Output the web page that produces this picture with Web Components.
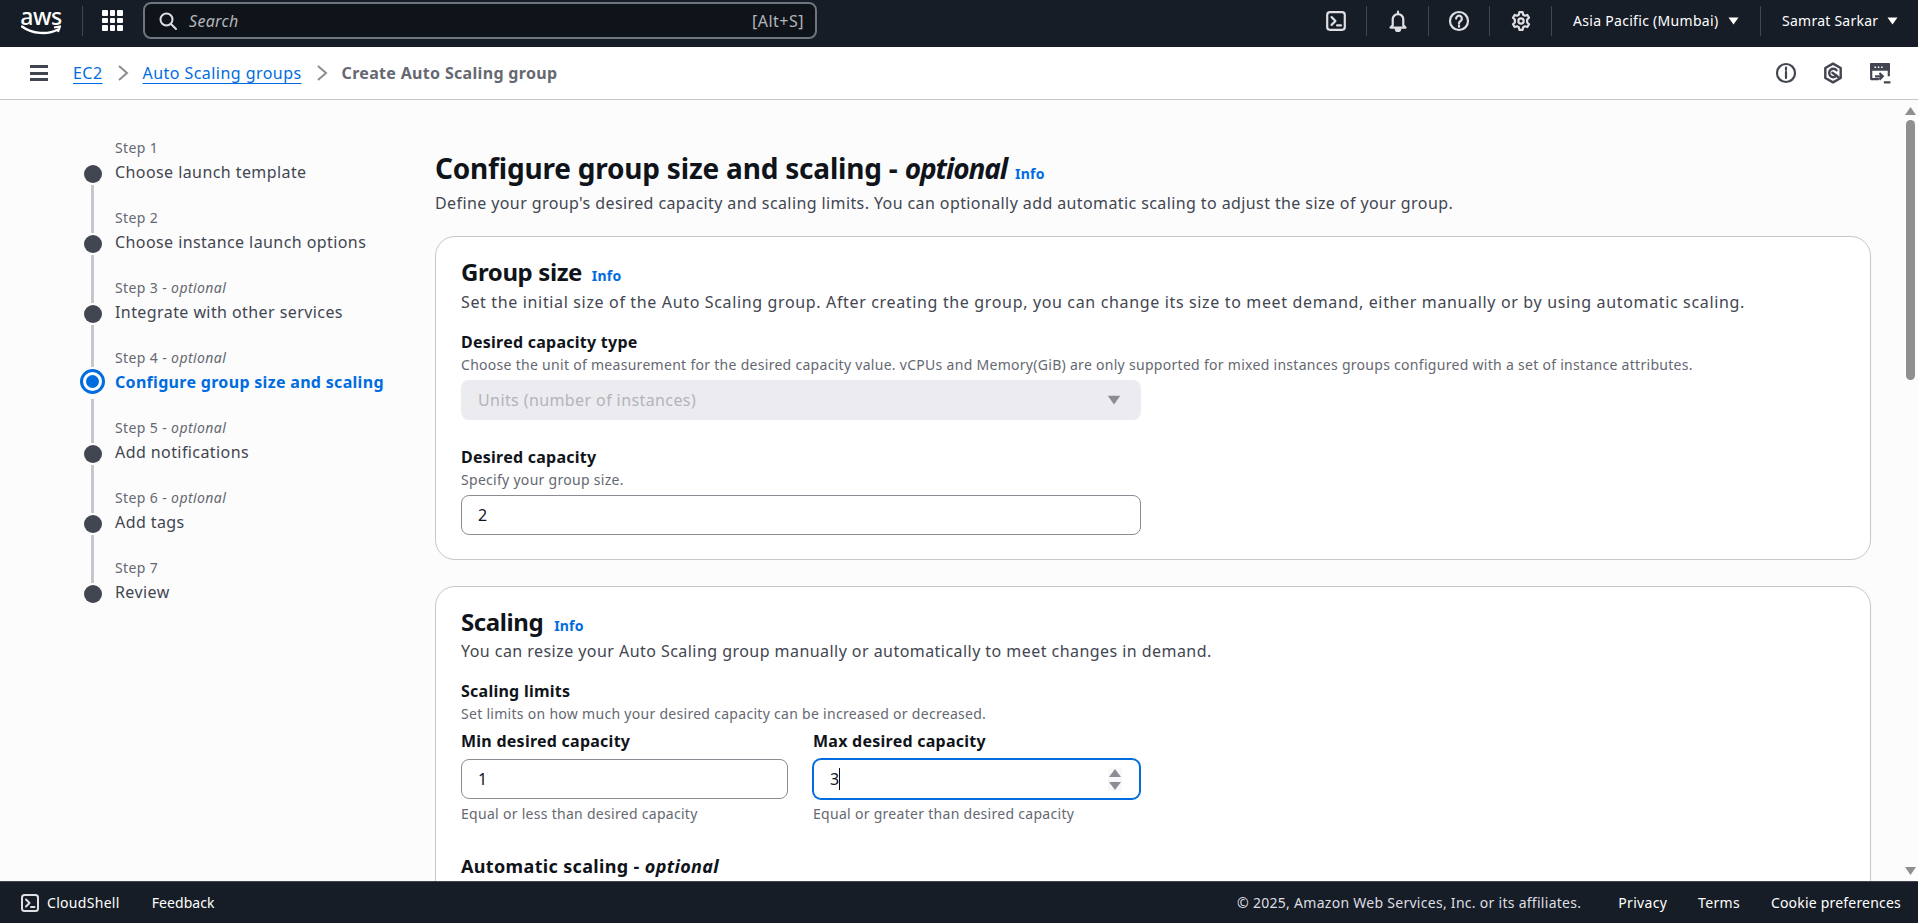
<!doctype html>
<html lang="en"><head><meta charset="utf-8"><title>Create Auto Scaling group</title>
<style>
html,body{margin:0;height:100%;overflow:hidden}
body{display:flex;flex-direction:column;height:923px;font:400 16px/24px "Noto Sans",sans-serif;color:#0f141a;background:#fcfcfd}
aws-shell-main{flex:1;min-height:0}
</style></head><body>
<aws-topnav></aws-topnav>
<aws-crumbs></aws-crumbs>
<aws-shell-main>
  <aws-wizard>
    <aws-step label="Step 1" title="Choose launch template" first></aws-step>
    <aws-step label="Step 2" title="Choose instance launch options"></aws-step>
    <aws-step label="Step 3" optional title="Integrate with other services"></aws-step>
    <aws-step label="Step 4" optional title="Configure group size and scaling" active></aws-step>
    <aws-step label="Step 5" optional title="Add notifications" after></aws-step>
    <aws-step label="Step 6" optional title="Add tags"></aws-step>
    <aws-step label="Step 7" title="Review"></aws-step>
  </aws-wizard>
  <aws-page>
    <aws-card heading="Group size" desc="Set the initial size of the Auto Scaling group. After creating the group, you can change its size to meet demand, either manually or by using automatic scaling." spacing=".65px" infogap="4px">
      <aws-field label="Desired capacity type" hint="Choose the unit of measurement for the desired capacity value. vCPUs and Memory(GiB) are only supported for mixed instances groups configured with a set of instance attributes." style="margin-top:16px">
        <aws-select value="Units (number of instances)"></aws-select>
      </aws-field>
      <aws-field label="Desired capacity" hint="Specify your group size." style="margin-top:25px">
        <aws-input value="2" style="width:680px"></aws-input>
      </aws-field>
    </aws-card>
    <aws-card heading="Scaling" desc="You can resize your Auto Scaling group manually or automatically to meet changes in demand." tight spacing=".45px" infogap="5px">
      <aws-field label="Scaling limits" hint="Set limits on how much your desired capacity can be increased or decreased." style="margin-top:16px"></aws-field>
      <aws-limits>
        <aws-field label="Min desired capacity" help="Equal or less than desired capacity" compact><aws-input value="1"></aws-input></aws-field>
        <aws-field label="Max desired capacity" help="Equal or greater than desired capacity" compact><aws-input value="3" focused></aws-input></aws-field>
      </aws-limits>
      <aws-subhead>Automatic scaling - <i>optional</i></aws-subhead>
    </aws-card>
  </aws-page>
  <aws-scrollbar></aws-scrollbar>
</aws-shell-main>
<aws-footer></aws-footer>
<script>
const ICONS={
 terminal:'<rect x="2" y="2" width="16" height="16" rx="2.5"/><path d="M6 6.5l3.5 3.5L6 13.5M11 14h3.5"/>',
 bell:'<path d="M10 1.5v2M5.2 14V8.5a4.8 4.8 0 0 1 9.6 0V14l2 2H3.2z"/><path d="M8 17.2a2 2 0 0 0 4 0z" fill="currentColor"/>',
 help:'<circle cx="10" cy="10" r="8.2"/><path d="M7.4 7.8a2.6 2.6 0 1 1 4 2.2c-1 .6-1.4 1.1-1.4 2.2M10 14.200v1"/>',
 gear:'<path d="M8.5 2h3l.5 2.3 1.6.9 2.2-.7 1.5 2.6-1.700 1.600v2.600l1.700 1.600-1.500 2.600-2.200-.7-1.600.9-.5 2.300h-3L8 15.700l-1.600-.9-2.200.7-1.500-2.600 1.700-1.600V8.700L2.700 7.100l1.500-2.600 2.200.7L8 4.300z"/><circle cx="10" cy="10" r="2.4"/>',
 info:'<circle cx="10" cy="10" r="8.2"/><path d="M10 9v5.500M10 5.200v1.800"/>',
 hex:'<path d="M10 1.500l7 4v9l-7 4-7-4v-9z"/><path d="M13.200 12.500a3.800 3.800 0 1 1 0-5"/><path d="M9.500 9.800l5.500 4"/>',
 screen:'<path d="M8 15.500H2V2h16v10" stroke-linecap="square"/><path d="M2 2h16v5H2z" fill="currentColor"/><path d="M5 4.800h1.400M8 4.800h1.400M11 4.800h1.400" stroke="#fff" stroke-width="1.500" stroke-linecap="butt"/><path d="M5.500 13h7M9.500 10l3 3-3 3" stroke-linecap="butt" stroke-linejoin="miter"/><path d="M13.500 18.500h6" stroke-linecap="butt"/>'
};
function icon(n,s=20,sw=2){return `<svg width="${s}" height="${s}" viewBox="0 0 20 20" fill="none" stroke="currentColor" stroke-width="${sw}" stroke-linejoin="round" stroke-linecap="round" style="display:block;flex:none">${ICONS[n]}</svg>`}
const caret=(c,w=11,h=8)=>`<svg width="${w}" height="${h}" viewBox="0 0 11 8" style="display:block;flex:none"><path d="M.5.5h10L5.500 7.500z" fill="${c}"/></svg>`;
function def(name,render){customElements.define(name,class extends HTMLElement{connectedCallback(){if(this.shadowRoot)return;this.attachShadow({mode:'open'}).innerHTML=render(this)}})}

def('aws-topnav',()=>`<style>
:host{display:flex;align-items:center;height:47px;flex:none;background:#161d26;color:#fff;font-size:14px;letter-spacing:.25px;box-sizing:border-box;padding-bottom:6px}
.logo{width:40px;margin-left:21px;display:flex;flex-direction:column;align-items:center;flex:none;margin-top:3px}
.logo b{font:500 23px/16px "Noto Sans",sans-serif;letter-spacing:-.5px;height:18px}
.logo svg{margin-top:-1px}
.sep{width:1px;height:30px;background:#424650;flex:none}
.grid{display:grid;grid-template-columns:repeat(3,5.500px);grid-auto-rows:5.500px;gap:2px;margin:0 20.500px 0 19px;flex:none}
.grid i{background:#fff;border-radius:1px}
.search{width:674px;height:37px;box-sizing:border-box;border:2px solid #70747c;border-radius:8px;background:#0f141a;display:flex;align-items:center;padding:0 11px 0 13px;color:#b4b4bb;flex:none;font-size:16px}
.search svg{color:#dedee3}.search em{margin-left:11px;flex:1;letter-spacing:.3px}
.search span{letter-spacing:.5px}
.box{display:flex;justify-content:center;align-items:center;flex:none}
.box svg{color:#dedee3}
.menu{display:flex;align-items:center;color:#fff}
.asia{letter-spacing:.3px;width:155px;flex:none;white-space:nowrap}
.sam{width:105px;flex:none;white-space:nowrap}
</style>
<div class="logo"><b>aws</b><svg width="40" height="11" viewBox="0 0 40 11"><path d="M1 1.500C11 9 27 10 37 4.500" fill="none" stroke="#fff" stroke-width="2.400" stroke-linecap="round"/><path d="M33 2.500l6-1-2 5.500" fill="none" stroke="#fff" stroke-width="2"/></svg></div>
<span class="sep" style="margin-left:21px"></span>
<div class="grid">${'<i></i>'.repeat(9)}</div>
<div class="search"><svg width="20" height="20" viewBox="0 0 20 20" fill="none" stroke="currentColor" stroke-width="2" stroke-linecap="round" style="flex:none"><circle cx="8.500" cy="8.500" r="6"/><path d="M13 13l5 5"/></svg><em>Search</em><span>[Alt+S]</span></div>
<span style="flex:1"></span>
<div class="box" style="width:61px">${icon('terminal',22)}</div><span class="sep"></span>
<div class="box" style="width:61px">${icon('bell',22)}</div><span class="sep"></span>
<div class="box" style="width:60px">${icon('help',22)}</div><span class="sep"></span>
<div class="box" style="width:61px">${icon('gear',22)}</div><span class="sep"></span>
<div class="menu" style="margin-left:21px;width:187px"><span class="asia">Asia Pacific (Mumbai)</span>${caret('#fff')}</div><span class="sep"></span>
<div class="menu" style="margin-left:21px;width:136px"><span class="sam">Samrat Sarkar</span>${caret('#fff')}</div>`);

def('aws-crumbs',()=>`<style>
:host{display:flex;align-items:center;height:53px;flex:none;box-sizing:border-box;background:#fff;border-bottom:1px solid #c6c6cd;padding:0 27px 0 30px;letter-spacing:.45px}
.ham{display:flex;flex-direction:column;gap:3.500px;width:18px;margin-right:25px;flex:none}
.ham i{height:3px;background:#424650;display:block}
a{color:#006ce0;text-decoration:underline;text-underline-offset:4px}
.ch{margin:0 14px;display:block;flex:none}
b{color:#656871;font-weight:700;letter-spacing:.32px}
.sp{flex:1}
.ic{display:flex;gap:25px;color:#424650}
</style>
<div class="ham"><i></i><i></i><i></i></div>
<a>EC2</a><svg class="ch" width="12" height="18" viewBox="0 0 12 18" fill="none" stroke="#8c8c94" stroke-width="2"><path d="M2 2l8 7-8 7"/></svg>
<a>Auto Scaling groups</a><svg class="ch" width="12" height="18" viewBox="0 0 12 18" fill="none" stroke="#8c8c94" stroke-width="2"><path d="M2 2l8 7-8 7"/></svg>
<b>Create Auto Scaling group</b><span class="sp"></span>
<div class="ic">${icon('info',22)}${icon('hex',22,2.2)}${icon('screen',22)}</div>`);

customElements.define('aws-shell-main',class extends HTMLElement{connectedCallback(){if(this.shadowRoot)return;this.attachShadow({mode:'open'}).innerHTML=`<style>:host{display:flex;overflow:hidden;min-height:0}</style><slot></slot>`}});

def('aws-wizard',()=>`<style>:host{display:block;width:435px;flex:none;box-sizing:border-box;padding:15px 0 0 83px}</style><slot></slot>`);

def('aws-step',h=>{const a=h.hasAttribute('active'),f=h.hasAttribute('first'),af=h.hasAttribute('after');
return `<style>
:host{display:flex;height:70px;gap:13px}
.mk{width:19px;display:flex;flex-direction:column;align-items:center;flex:none;padding-bottom:2px;box-sizing:border-box}
.ln{flex:1;width:3px;background:#c6c6cd;margin-top:${af?4:0}px;${f?'visibility:hidden;':''}margin-bottom:2px}
.dot{width:18px;height:18px;border-radius:50%;background:#424650;flex:none}
.dot.on{width:25px;height:25px;box-sizing:border-box;border:3px solid #006ce0;padding:3px;background:#006ce0;background-clip:content-box;margin:0 -3px -1px;position:relative}
.tx{padding-top:23px}
.l{font-size:14px;line-height:20px;color:#656871;letter-spacing:.38px;height:21px}
.l i{letter-spacing:.42px}
.t{line-height:24px;color:#424650;letter-spacing:.42px;white-space:nowrap;padding-top:.5px}
.t.on{color:#006ce0;font-weight:700;letter-spacing:.31px}
</style><div class="mk"><div class="ln"></div><div class="dot ${a?'on':''}"></div></div>
<div class="tx"><div class="l">${h.getAttribute('label')}${h.hasAttribute('optional')?' - <i>optional</i>':''}</div><div class="t ${a?'on':''}">${h.getAttribute('title')}</div></div>`});

def('aws-page',()=>`<style>
:host{display:block;flex:1;min-width:0;padding-right:32px;overflow:hidden}
h1{font:700 28px/36px "Noto Sans",sans-serif;letter-spacing:-.2px;margin:50px 0 0;color:#0f141a}
h1 i{letter-spacing:-1.1px}
h1 a{font:700 14px/20px "Noto Sans",sans-serif;color:#006ce0;margin-left:1px;letter-spacing:.2px}
p{margin:5px 0 21px;color:#424650;letter-spacing:.4px;line-height:24px}
::slotted(aws-card){margin-bottom:26px}
</style>
<h1>Configure group size and scaling - <i>optional</i> <a>Info</a></h1>
<p>Define your group's desired capacity and scaling limits. You can optionally add automatic scaling to adjust the size of your group.</p>
<slot></slot>`);

def('aws-card',h=>`<style>
:host{display:block;background:#fff;border:1px solid #c6c6cd;border-radius:20px;padding:20px 25px 24px}
h2{font:700 24px/30px "Noto Sans",sans-serif;margin:0;color:#0f141a;letter-spacing:-.4px}
h2 a{font:700 14px/20px "Noto Sans",sans-serif;color:#006ce0;margin-left:${h.getAttribute('infogap')};letter-spacing:.2px}
p{margin:${h.hasAttribute('tight')?2:3}px 0 0;color:#424650;line-height:24px;letter-spacing:${h.getAttribute('spacing')}}
</style><h2>${h.getAttribute('heading')} <a>Info</a></h2><p>${h.getAttribute('desc')}</p><slot></slot>`);

def('aws-field',h=>{const hint=h.getAttribute('hint'),help=h.getAttribute('help'),c=h.hasAttribute('compact');
return `<style>
:host{display:block}
.lb{font-weight:700;line-height:24px;letter-spacing:.25px;color:#0f141a}
.hi{font-size:14px;line-height:20px;color:#656871;margin-top:1px;letter-spacing:.29px;white-space:nowrap;margin-bottom:${h.hasAttribute('style')&&h.children.length?5:0}px}
.he{font-size:14px;line-height:20px;color:#656871;margin-top:5px;letter-spacing:.29px}
slot{display:block;margin-top:${c?6:0}px}
</style><div class="lb">${h.getAttribute('label')}</div>${hint?`<div class="hi">${hint}</div>`:''}<slot></slot>${help?`<div class="he">${help}</div>`:''}`});

def('aws-select',h=>`<style>
:host{display:flex;align-items:center;justify-content:space-between;height:40px;box-sizing:border-box;width:680px;background:#ebebf0;border-radius:8px;padding:0 20px 0 17px;color:#b4b4bb;letter-spacing:.4px}
span{margin-top:-1px}
</style><span>${h.getAttribute('value')}</span>${caret('#8c8c94',14,10)}`);

def('aws-input',h=>{const f=h.hasAttribute('focused');return `<style>
:host{display:flex;align-items:center;height:40px;box-sizing:border-box;background:#fff;border:1px solid ${f?'#006ce0':'#8c8c94'};border-radius:8px;padding:0 17px 0 16px;${f?'box-shadow:0 0 0 1px #006ce0;':''}color:#0f141a;position:relative}
.car{width:1px;height:22px;background:#0f141a;margin-left:0;flex:none}
.sp{margin-left:auto;display:flex;flex-direction:column;gap:5px;background:#f8f8fa;padding:1px}
</style><span>${h.getAttribute('value')}</span>${f?`<i class="car"></i><div class="sp"><svg width="12" height="8" viewBox="0 0 12 8" style="display:block"><path d="M6 0l6 8H0z" fill="#8c8c94"/></svg><svg width="12" height="8" viewBox="0 0 12 8" style="display:block"><path d="M0 0h12L6 8z" fill="#8c8c94"/></svg></div>`:''}`});

def('aws-limits',()=>`<style>:host{display:grid;grid-template-columns:327px 327px;gap:25px;margin-top:5px}</style><slot></slot>`);
def('aws-subhead',()=>`<style>:host{display:block;font-size:18px;line-height:24px;font-weight:700;margin-top:30px;letter-spacing:.35px}</style><slot></slot>`);

def('aws-scrollbar',()=>`<style>
:host{display:flex;flex-direction:column;align-items:center;width:15px;flex:none;background:#fcfcfd;position:relative}
.th{width:9px;height:260px;background:#8f8f8f;border-radius:5px;margin-top:5px}
.sp{flex:1}
svg{display:block;margin-top:7px}
.dn{margin:0 0 6px}
</style><svg width="11" height="8" viewBox="0 0 11 8"><path d="M5.500 0L11 8H0z" fill="#8f8f8f"/></svg><div class="th"></div><div class="sp"></div><svg class="dn" width="11" height="8" viewBox="0 0 11 8"><path d="M0 0h11L5.500 8z" fill="#8f8f8f"/></svg>`);

def('aws-footer',()=>`<style>
:host{display:flex;align-items:center;height:42px;flex:none;box-sizing:border-box;background:#161d26;border-top:1px solid #424650;color:#fff;font-size:14px;letter-spacing:.3px;padding:0 17px 0 20px}
.cs{display:flex;align-items:center;gap:7px;margin-right:32px}
.cs svg{color:#dedee3}
.fb{letter-spacing:.08px}
.sp{flex:1}
.c{color:#dedee3;letter-spacing:.28px;margin-right:6px}
.r{margin-left:31px}
.k{letter-spacing:.2px}
</style><div class="cs">${icon('terminal',20)}<span>CloudShell</span></div><span class="fb">Feedback</span><span class="sp"></span>
<span class="c">© 2025, Amazon Web Services, Inc. or its affiliates.</span><span class="r">Privacy</span><span class="r">Terms</span><span class="r k">Cookie preferences</span>`);
</script>
</body></html>
